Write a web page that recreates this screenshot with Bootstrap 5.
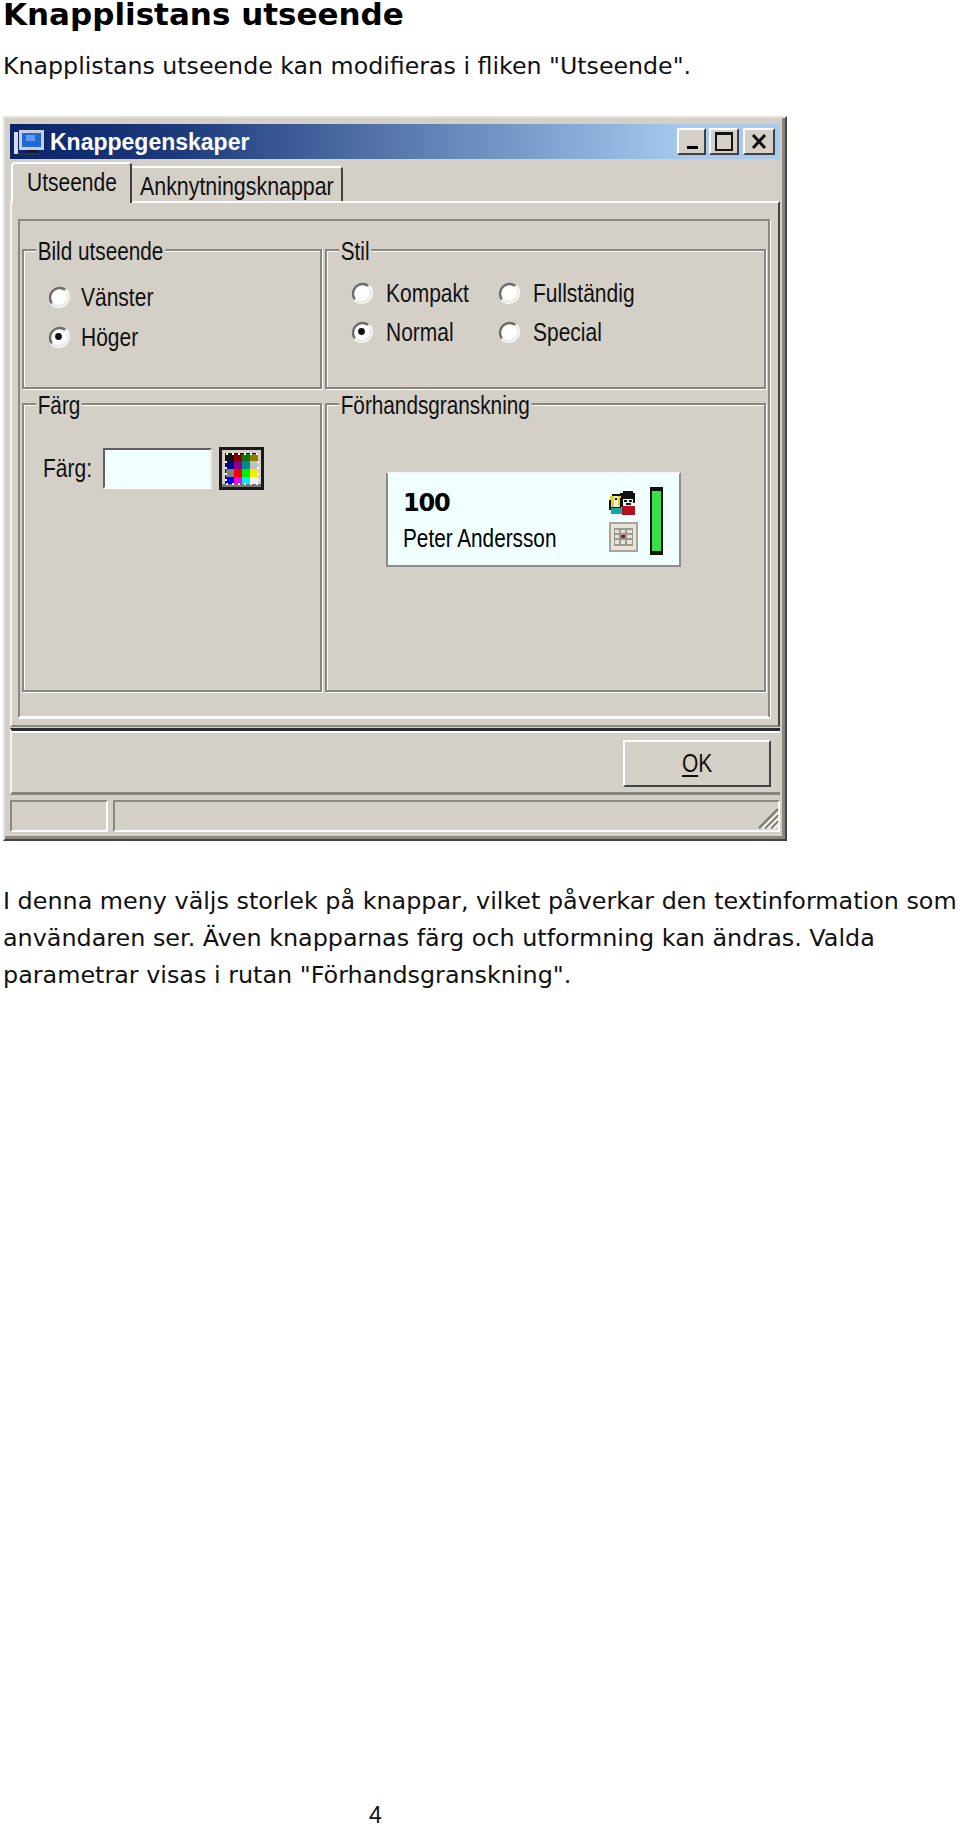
<!DOCTYPE html>
<html lang="sv">
<head>
<meta charset="utf-8">
<title>Knapplistans utseende</title>
<link rel="stylesheet" href="https://cdn.jsdelivr.net/npm/bootstrap@5.3.0/dist/css/bootstrap.min.css">
<style>
html,body{background:#fff;margin:0}
body{height:1827px;overflow:hidden;font-family:"DejaVu Sans",Verdana,sans-serif;color:#111;position:relative}
.doc-page{height:1827px;padding-left:3px;display:flex;flex-direction:column}
.doc-h{font-family:"DejaVu Sans",sans-serif;font-weight:700;font-size:31px;line-height:29px;margin:0;color:#000;padding-bottom:0}
.doc-p{font-size:23.85px;line-height:37px;margin:0}
.doc-p1{font-size:23.7px;margin-top:19px;margin-bottom:31px}
.doc-p2{margin-top:42px}
.doc-num{font-family:"Liberation Sans",Arial,sans-serif;font-size:23px;line-height:24px;margin-top:auto;padding-left:366px}
.win{width:784px;height:725px;flex:none;background:#d4d0c8;padding:6px 5px 6px 5px;border-style:solid;border-width:2px 2px 2px 2px;border-color:#e4e2dc #444 #444 #e4e2dc;box-shadow:inset -3px -3px 0 #8a8780;font-family:"Liberation Sans",Arial,sans-serif;color:#111;font-size:25px;line-height:26px}
.tall{display:inline-block;transform:scaleX(.84);transform-origin:left center;white-space:nowrap}
.titlebar{height:35px;background:linear-gradient(90deg,#0a246a 0%,#1d3b7c 22%,#a6caf0 88%,#a6caf0 100%);display:flex;align-items:center;padding:0 5px 0 3px;color:#fff;font-weight:700;font-size:23px}
.ticon{margin-right:3px;flex:none}
.capbtns{margin-left:auto;display:flex;align-items:center}
.capbtn{height:27px;background:#d4d0c8;border:2px solid;border-color:#fff #404040 #404040 #fff;display:block;flex:none}
.capbtn svg{display:block;width:100%;height:100%}
.capbtn-min{width:29px}
.capbtn-max{width:30px;margin-left:3px}
.capbtn-close{width:32px;margin-left:4px}
.tabstrip{height:39px;margin-top:3px;display:flex;align-items:flex-end;padding-left:1px;position:relative;z-index:1}
.wtab{background:#d4d0c8;border:2px solid;border-color:#fff #404040 transparent #fff;border-bottom:0;border-radius:4px 4px 0 0}
.wtab-a{height:41px;width:121px;margin-bottom:-2px;padding:5px 0 0 14px}
.wtab-b{height:35px;width:211px;padding:5px 0 0 8px;border-left:0;border-radius:0 4px 0 0}
.wtab-b .tall{transform:scaleX(.855)}
.tabpanel{height:526px;border:2px solid;border-color:#fff #444 #8a8780 #f4f3f0;padding:16px 8px 7px 6px}
.outergroup{height:499px;border:2px solid;border-color:#8a8780 #8a8780 #fff #8a8780;box-shadow:1px 1px 0 #fff;padding:28px 2px 24px 2px;display:grid;grid-template-columns:300px 441px;grid-template-rows:140px 289px;column-gap:3px;row-gap:14px}
.gbox{position:relative;border:2px solid #8a8780;box-shadow:inset 1px 1px 0 #fff,1px 1px 0 #fff}
.gtitle{position:absolute;top:-12px;left:12px;background:#d4d0c8;padding:0 2px;height:24px;line-height:24px;white-space:nowrap;transform:scaleX(.83);transform-origin:left center}
.radios-a{padding:34px 0 0 23px;display:flex;flex-direction:column;gap:17px}
.radios-b{padding:30px 0 0 23px;display:grid;grid-template-columns:147px 147px;row-gap:16px;width:max-content}
.wradio{display:flex;align-items:center;height:23px;white-space:nowrap}
.wradio svg{width:23px;height:23px;flex:none;margin-right:11px}
.radios-b .wradio svg{margin-right:13px}
.colorrow{padding:42px 0 0 19px;display:flex;align-items:flex-start}
.colorlabel{width:60px;padding-top:8px}
.colorfield{width:109px;height:41px;margin-top:1px;background:#f0ffff;border:2px solid;border-color:#606060 #e8e8e8 #fff #606060}
.palette{width:45px;height:43px;margin-left:7px;display:block;flex:none}
.previewcard{width:295px;height:95px;margin:67px 0 0 59px;background:#f0ffff;border:2px solid;border-color:#f6f6f2 #8c8c88 #8c8c88 #8c8c88;display:flex;padding:0 16px 0 15px}
.prevtext{flex:1;padding-top:15px}
.prevnum{font-family:"DejaVu Sans",sans-serif;font-weight:700;font-size:24px;line-height:28px;color:#000;letter-spacing:-1.2px}
.prevname{font-size:25px;line-height:26px;margin-top:8px;color:#000}
.prevname .tall{transform:scaleX(.83)}
.previcons{width:29px;margin-right:12px;padding-top:17px;display:flex;flex-direction:column}
.previcons svg{display:block;flex:none}
.prevperson{width:27px;height:24px}
.prevcal{width:29px;height:30px;margin-top:7px}
.prevbar{width:13px;height:68px;margin-top:13px;background:#35e04a;border:solid #111;border-width:4px 2px 4px 2px;flex:none}
.bottompanel{height:67px;margin-top:1px;border-top:3px solid #2c2c2c;border-bottom:3px solid #8a8780;box-shadow:inset 0 2px 0 #fff;border-left:2px solid #f4f3f0;display:flex;justify-content:flex-end;align-items:flex-start;padding:9px 9px 0 0}
.okbtn{width:148px;height:47px;border:2px solid;border-color:#fff #444 #444 #fff;background:#d4d0c8;display:flex;align-items:center;justify-content:center;font-size:25px;color:#111;padding:0;border-radius:0}
.okbtn .tall{transform-origin:center}
.okbtn u{text-underline-offset:3px}
.statusrow{height:32px;margin-top:5px;display:flex;gap:5px;position:relative}
.statcell{border:2px solid;border-color:#8a8780 #fff #fff #8a8780}
.statcell-a{width:98px}
.statcell-b{flex:1}
.grip{position:absolute;right:0;bottom:2px;width:24px;height:24px}
</style>
</head>
<body>
<svg width="0" height="0" class="position-absolute">
<defs>
<symbol id="rad" viewBox="0 0 23 23">
<circle cx="11.5" cy="11.5" r="9" fill="#fff"/>
<path d="M18.2 4.8A9.6 9.6 0 0 0 4.8 18.2" fill="none" stroke="#6e6c66" stroke-width="2.4"/>
<path d="M4.5 19.2A10.4 10.4 0 0 0 19.2 4.5" fill="none" stroke="#f4f3f0" stroke-width="2.2"/>
</symbol>
<symbol id="raddot" viewBox="0 0 23 23">
<use href="#rad"/>
<circle cx="11.5" cy="11.5" r="3.4" fill="#111"/>
</symbol>
</defs>
</svg>
<main class="doc-page">
<h1 class="doc-h">Knapplistans utseende</h1>
<p class="doc-p doc-p1">Knapplistans utseende kan modifieras i fliken "Utseende".</p>
<section class="win">
<div class="titlebar">
<svg class="ticon" width="34" height="32" viewBox="0 0 34 32" shape-rendering="crispEdges"><rect x="1" y="6" width="4" height="22" fill="#d8dbe2"/><rect x="6" y="4" width="25" height="20" fill="#c9cdd6"/><rect x="9" y="7" width="19" height="14" fill="#2268d8"/><rect x="13" y="9" width="9" height="6" fill="#5f9cf0"/><rect x="14" y="24" width="10" height="3" fill="#111a30"/><rect x="5" y="27" width="22" height="2" fill="#27324e"/></svg>
<span>Knappegenskaper</span>
<div class="capbtns">
<span class="capbtn capbtn-min"><svg viewBox="0 0 25 23"><rect x="8" y="16" width="11" height="3" fill="#000"/></svg></span>
<span class="capbtn capbtn-max"><svg viewBox="0 0 26 23"><rect x="5" y="3" width="16" height="17" fill="none" stroke="#111" stroke-width="2"/><rect x="4" y="2" width="18" height="3" fill="#111"/></svg></span>
<span class="capbtn capbtn-close"><svg viewBox="0 0 28 23"><path d="M8 5l12 13M20 5L8 18" stroke="#111" stroke-width="3" fill="none"/></svg></span>
</div>
</div>
<div class="tabstrip">
<div class="wtab wtab-a"><span class="tall">Utseende</span></div>
<div class="wtab wtab-b"><span class="tall">Anknytningsknappar</span></div>
</div>
<div class="tabpanel">
<div class="outergroup">
<div class="gbox">
<span class="gtitle">Bild utseende</span>
<div class="radios-a">
<div class="wradio"><svg><use href="#rad"/></svg><span class="tall">Vänster</span></div>
<div class="wradio"><svg><use href="#raddot"/></svg><span class="tall">Höger</span></div>
</div>
</div>
<div class="gbox">
<span class="gtitle">Stil</span>
<div class="radios-b">
<div class="wradio"><svg><use href="#rad"/></svg><span class="tall">Kompakt</span></div>
<div class="wradio"><svg><use href="#rad"/></svg><span class="tall">Fullständig</span></div>
<div class="wradio"><svg><use href="#raddot"/></svg><span class="tall">Normal</span></div>
<div class="wradio"><svg><use href="#rad"/></svg><span class="tall">Special</span></div>
</div>
</div>
<div class="gbox">
<span class="gtitle">Färg</span>
<div class="colorrow">
<span class="colorlabel"><span class="tall">Färg:</span></span>
<span class="colorfield"></span>
<svg class="palette" viewBox="0 0 45 43" shape-rendering="crispEdges">
<rect width="45" height="43" fill="#1a1a1a"/><rect x="3" y="3" width="39" height="37" fill="#d4d0c8"/><rect x="3" y="37" width="39" height="3" fill="#777"/>
<rect x="6" y="6" width="33" height="31" fill="#111"/>
<rect x="7" y="7" width="8" height="7" fill="#111"/><rect x="15" y="7" width="8" height="7" fill="#8b0000"/><rect x="23" y="7" width="8" height="7" fill="#0a7a10"/><rect x="31" y="7" width="8" height="7" fill="#8b8000"/>
<rect x="7" y="14" width="8" height="8" fill="#00008b"/><rect x="15" y="14" width="8" height="8" fill="#8b008b"/><rect x="23" y="14" width="8" height="8" fill="#008b8b"/><rect x="31" y="14" width="8" height="8" fill="#c0c0c0"/>
<rect x="7" y="22" width="8" height="8" fill="#808080"/><rect x="15" y="22" width="8" height="8" fill="#f00000"/><rect x="23" y="22" width="8" height="8" fill="#00f000"/><rect x="31" y="22" width="8" height="8" fill="#f0f000"/>
<rect x="7" y="30" width="8" height="7" fill="#0000f0"/><rect x="15" y="30" width="8" height="7" fill="#f000f0"/><rect x="23" y="30" width="8" height="7" fill="#00f0f0"/><rect x="31" y="30" width="8" height="7" fill="#f0f0f0"/>
<path d="M7 7h32M7 37h32M39 14v23M7 14v23" stroke="#fff" stroke-width="2" stroke-dasharray="2 4" fill="none"/>
</svg>
</div>
</div>
<div class="gbox">
<span class="gtitle">Förhandsgranskning</span>
<div class="previewcard">
<div class="prevtext">
<div class="prevnum">100</div>
<div class="prevname"><span class="tall">Peter Andersson</span></div>
</div>
<div class="previcons">
<svg class="prevperson" viewBox="0 0 27 24" shape-rendering="crispEdges">
<rect x="14" y="0" width="10" height="3" fill="#111"/><rect x="11" y="2" width="15" height="6" fill="#111"/>
<rect x="3" y="3" width="9" height="2" fill="#111"/><rect x="1" y="5" width="4" height="12" fill="#e8d020"/><rect x="9" y="5" width="3" height="10" fill="#e8d020"/>
<rect x="5" y="5" width="4" height="10" fill="#f2f2c8"/><rect x="6" y="7" width="2" height="2" fill="#111"/>
<rect x="13" y="8" width="11" height="8" fill="#f4f4ee"/><rect x="15" y="9" width="3" height="2" fill="#111"/><rect x="20" y="9" width="3" height="2" fill="#111"/><rect x="17" y="12" width="5" height="2" fill="#111"/><rect x="11" y="7" width="3" height="9" fill="#111"/><rect x="24" y="7" width="2" height="5" fill="#111"/>
<rect x="0" y="9" width="2" height="10" fill="#111"/>
<rect x="2" y="17" width="12" height="6" fill="#18a5a5"/><rect x="13" y="15" width="13" height="9" fill="#b01020"/><rect x="2" y="16" width="10" height="1" fill="#111"/>
</svg>
<svg class="prevcal" viewBox="0 0 29 30" shape-rendering="crispEdges">
<rect width="29" height="30" fill="#a8a49a"/><rect x="2" y="2" width="25" height="26" fill="#e6e3da"/>
<rect x="5" y="6" width="19" height="18" fill="#9c988e"/>
<g fill="#e6e3da"><rect x="6" y="8" width="4" height="3"/><rect x="12" y="8" width="4" height="3"/><rect x="18" y="8" width="5" height="3"/><rect x="6" y="13" width="4" height="3"/><rect x="18" y="13" width="5" height="3"/><rect x="6" y="18" width="4" height="4"/><rect x="12" y="18" width="4" height="4"/><rect x="18" y="18" width="5" height="4"/></g>
<rect x="12" y="13" width="4" height="3" fill="#a01018"/>
</svg>
</div>
<div class="prevbar"></div>
</div>
</div>
</div>
</div>
<div class="bottompanel"><button type="button" class="btn okbtn"><span class="tall"><u>O</u>K</span></button></div>
<div class="statusrow">
<div class="statcell statcell-a"></div>
<div class="statcell statcell-b"></div>
<svg class="grip" viewBox="0 0 24 24"><path d="M22 3L3 22M22 9L9 22M22 15L15 22" stroke="#7a7770" stroke-width="2.2" fill="none"/><path d="M23 6L6 23M23 12L12 23M23 18L18 23" stroke="#fff" stroke-width="1.4" fill="none"/></svg>
</div>
</section>
<p class="doc-p doc-p2">I denna meny väljs storlek på knappar, vilket påverkar den textinformation som användaren ser. Även knapparnas färg och utformning kan ändras. Valda parametrar visas i rutan "Förhandsgranskning".</p>
<div class="doc-num">4</div>
</main>
<script src="https://cdn.jsdelivr.net/npm/bootstrap@5.3.0/dist/js/bootstrap.bundle.min.js"></script>
</body>
</html>
